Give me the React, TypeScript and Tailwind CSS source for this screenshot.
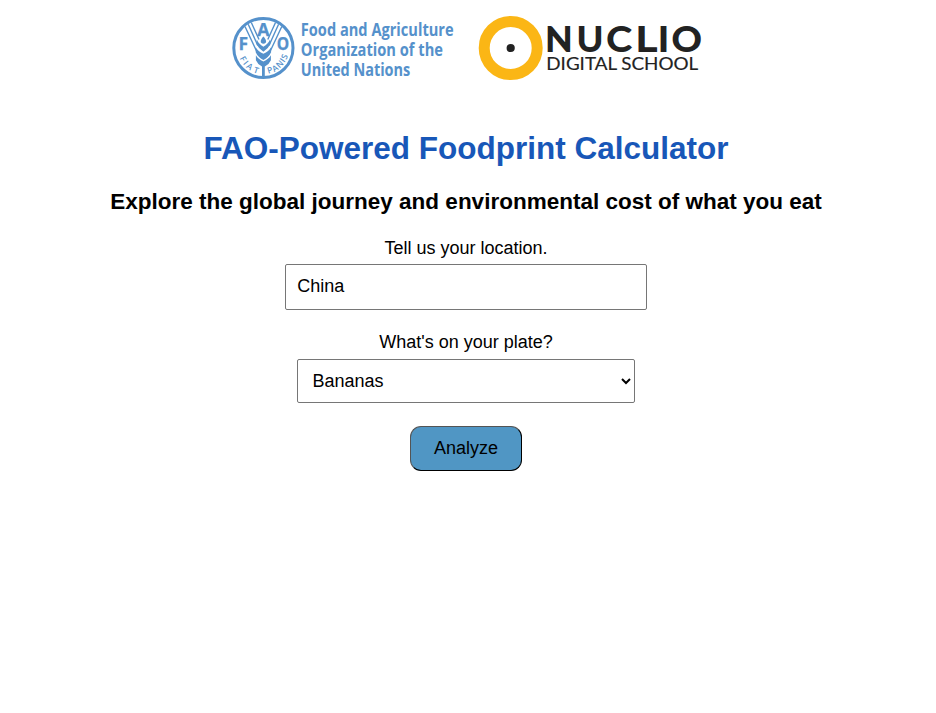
function FaoLogo() {
  return (
    <svg width="226" height="68" viewBox="230 14 226 68" fill="#5591cb" className="overflow-visible" role="img" aria-label="FAO">
      <circle cx="263.4" cy="48" r="29.6" fill="none" stroke="#5591cb" strokeWidth="3" />
      <g fill="none" stroke="#5591cb" strokeWidth="1.4">
        <path d="M245 26.500 256.500 51M248.200 24.300 257.800 45.500M251.300 22.500 259 39.500" />
        <path d="M281.800 26.500 270.300 51M278.600 24.300 269 45.500M275.500 22.500 267.800 39.500" />
      </g>
      <path d="M263.400 36.500c3.600 3.600 3.500 7.200 0 7.300c-3.500-.1-3.600-3.700 0-7.300z" />
      <path d="M256.800 39.500q1.800 4.500 6.600 7.200q4.800-2.700 6.600-7.200l.4 4.500q-2 4.500-7 7.700q-5-3.200-7-7.700z" />
      <path d="M255.700 47.300q2.300 4 7.700 6.500q5.400-2.500 7.700-6.500v5q-2.200 4.900-7.700 7.700q-5.500-2.800-7.700-7.700z" />
      <path d="M255.900 55.300q2.300 4 7.500 6.200q5.200-2.200 7.500-6.200v5q-1.800 4.300-6.100 6.200v11h-2.800v-11q-4.300-1.900-6.100-6.200z" />
      <g fontFamily="Open Sans, sans-serif" fontWeight="700" stroke="#5591cb" strokeWidth=".25">
        <text x="238.500" y="49.900" fontSize="17" textLength="9.600" lengthAdjust="spacingAndGlyphs">F</text>
        <text x="257.300" y="36.200" fontSize="17" textLength="12.200" lengthAdjust="spacingAndGlyphs">A</text>
        <text x="276.700" y="49.900" fontSize="17" textLength="12.400" lengthAdjust="spacingAndGlyphs">O</text>
      </g>
      <g fontFamily="Open Sans, sans-serif" fontWeight="600" fontSize="8.400" textAnchor="middle">
        <text transform="translate(240.700 60.200) rotate(61)">F</text>
        <text transform="translate(243.600 64.800) rotate(50)">I</text>
        <text transform="translate(248 69) rotate(36)">A</text>
        <text transform="translate(255.300 72.900) rotate(19)">T</text>
        <text transform="translate(270.800 73.100) rotate(-17)">P</text>
        <text transform="translate(276.600 70.700) rotate(-32)">A</text>
        <text transform="translate(281.900 66.300) rotate(-45)">N</text>
        <text transform="translate(285.100 62) rotate(-55)">I</text>
        <text transform="translate(287.300 57.800) rotate(-66)">S</text>
      </g>
      <g fontFamily="Open Sans, sans-serif" fontWeight="700" fontSize="17">
        <text x="300.800" y="36.300" textLength="152.800" lengthAdjust="spacingAndGlyphs">Food and Agriculture</text>
        <text x="300.800" y="56" textLength="142.200" lengthAdjust="spacingAndGlyphs">Organization of the</text>
        <text x="300.800" y="75.600" textLength="109.500" lengthAdjust="spacingAndGlyphs">United Nations</text>
      </g>
    </svg>
  );
}

function NuclioLogo() {
  return (
    <svg width="226" height="68" viewBox="477 14 226 68" fill="#222222" className="overflow-visible" role="img" aria-label="Nuclio Digital School">
      <circle cx="510.700" cy="48" r="26.500" fill="none" stroke="#fbb615" strokeWidth="11" />
      <circle cx="510.700" cy="48" r="4.100" />
      <g fontFamily="Lato, sans-serif" fontWeight="400" fontSize="33.600" stroke="#222222" strokeWidth="1.900">
        <text x="545.500" y="51" textLength="26.800" lengthAdjust="spacingAndGlyphs">N</text>
        <text x="577" y="51" textLength="26" lengthAdjust="spacingAndGlyphs">U</text>
        <text x="606.700" y="51" textLength="24.600" lengthAdjust="spacingAndGlyphs">C</text>
        <text x="636" y="51" textLength="20.500" lengthAdjust="spacingAndGlyphs">L</text>
        <text x="658.200" y="51" textLength="10.500" lengthAdjust="spacingAndGlyphs">I</text>
        <text x="672" y="51" textLength="29.400" lengthAdjust="spacingAndGlyphs">O</text>
      </g>
      <text x="546.300" y="70.100" fontFamily="Lato, sans-serif" fontSize="16.800" stroke="#222222" strokeWidth=".15" textLength="152" lengthAdjust="spacingAndGlyphs">DIGITAL SCHOOL</text>
    </svg>
  );
}

export default function App() {
  return (
    <main className="flex w-[932px] flex-col items-center bg-white pt-[14px] font-['Liberation_Sans',Arial,sans-serif] text-[18px] leading-[21px] text-black">
      <header className="flex gap-[21px]">
        <FaoLogo />
        <NuclioLogo />
      </header>
      <h1 className="mt-[48px] text-[31.5px] leading-[36px] font-bold whitespace-nowrap text-[#1857b8]">FAO-Powered Foodprint Calculator</h1>
      <h2 className="mt-[23px] text-[22.5px] leading-[26px] font-bold whitespace-nowrap">Explore the global journey and environmental cost of what you eat</h2>
      <label htmlFor="location" className="mt-[23px]">Tell us your location.</label>
      <input id="location" defaultValue="China" className="mt-[5px] h-[46px] w-[362px] rounded-[2px] border border-[#767676] bg-white px-[11.250px] pb-[2px]" />
      <label htmlFor="food" className="mt-[22px]">What's on your plate?</label>
      <select id="food" className="mt-[6px] h-[44px] w-[338px] rounded-[2px] border border-[#767676] bg-white pr-[11px] pl-[10.500px]">
        <option>Bananas</option>
      </select>
      <button className="mt-[23px] h-[45px] w-[112px] rounded-[11px] border border-black bg-[#5096c4] pb-px [border-style:outset]">Analyze</button>
    </main>
  );
}
